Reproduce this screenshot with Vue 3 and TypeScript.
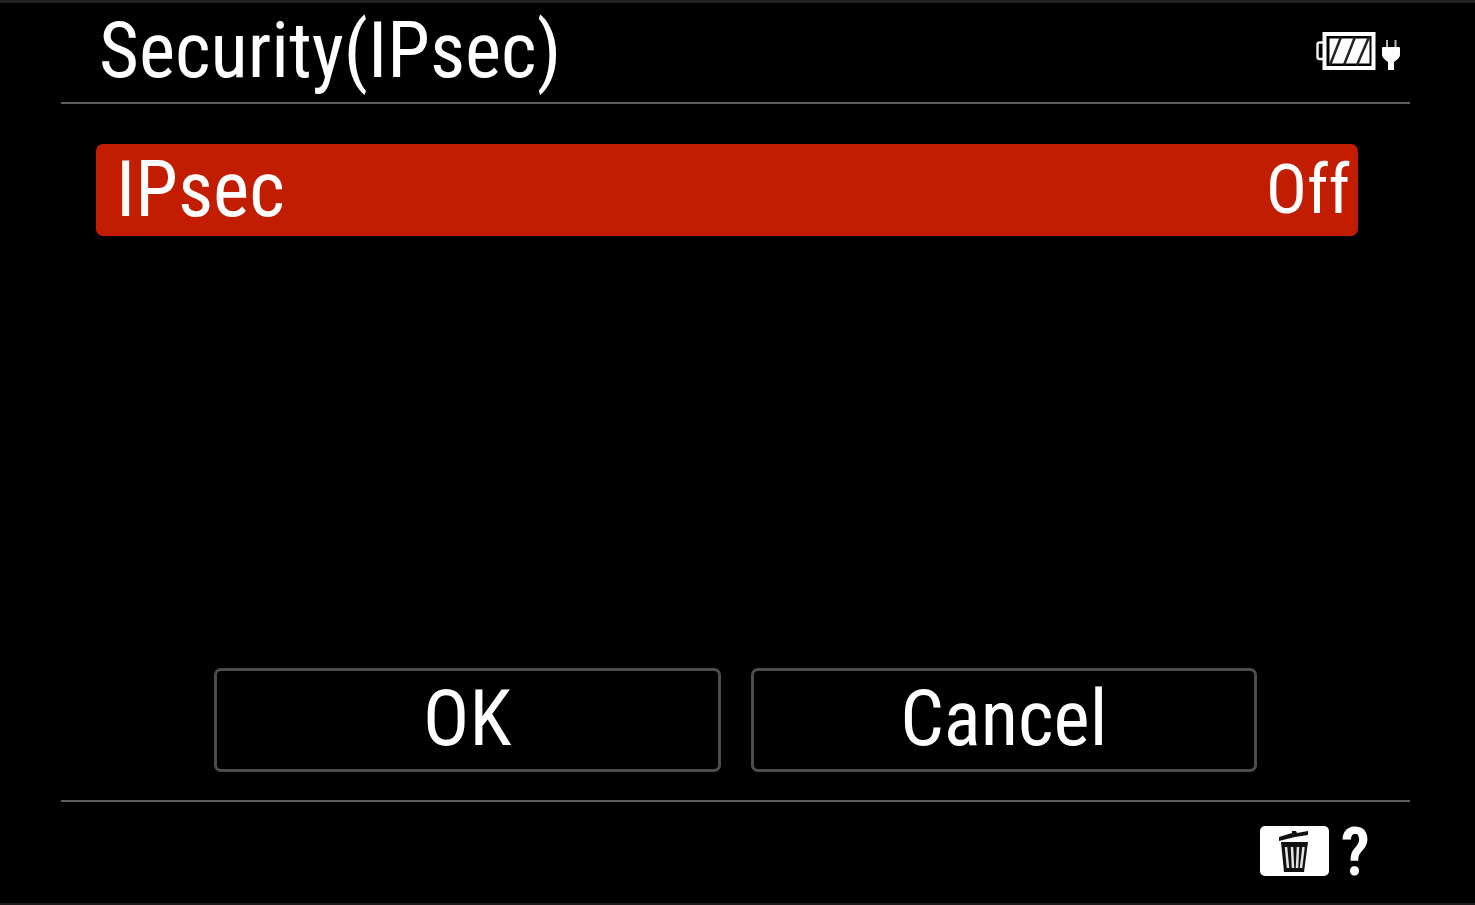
<script setup lang="ts">
import { ref } from 'vue'

interface Setting {
  label: string
  value: string
}

const title = 'Security(IPsec)'
const settings = ref<Setting[]>([{ label: 'IPsec', value: 'Off' }])
const actions: string[] = ['OK', 'Cancel']

function toggle(setting: Setting): void {
  setting.value = setting.value === 'Off' ? 'On' : 'Off'
}
</script>

<template>
  <main class="screen">
    <header class="header">
      <h1 class="title">{{ title }}</h1>
      <div class="status">
        <svg class="battery" viewBox="0 0 60 38" role="img" aria-label="Battery full">
          <path d="M7 10.500H3.500Q1.500 10.500 1.500 12.500V25Q1.500 27 3.500 27H7" fill="none" stroke="#eee" stroke-width="2.500" />
          <rect x="8.500" y="2" width="49" height="34" fill="none" stroke="#fff" stroke-width="4" />
          <rect x="13.500" y="6.500" width="40" height="25" fill="#fff" />
          <path d="M25 5L14 33M39 5L28 33M53 5L41 33" stroke="#222" stroke-width="2.500" />
        </svg>
        <svg class="plug" viewBox="0 0 18 30" role="img" aria-label="External power">
          <path d="M5 0V9M13.500 0V9" stroke="#bbb" stroke-width="2" />
          <path d="M1 7H17Q18 7 18 8V15Q18 18 12 22V30H6V22Q0 18 0 15V8Q0 7 1 7Z" fill="#fff" />
        </svg>
      </div>
    </header>

    <section class="body">
      <ul class="settings">
        <li v-for="setting in settings" :key="setting.label">
          <button type="button" class="setting" @click="toggle(setting)">
            <span>{{ setting.label }}</span>
            <span class="value">{{ setting.value }}</span>
          </button>
        </li>
      </ul>
      <div class="actions">
        <button v-for="action in actions" :key="action" type="button" class="action">
          {{ action }}
        </button>
      </div>
    </section>

    <footer class="footer">
      <button type="button" class="help" aria-label="Help">
        <svg class="trash" viewBox="0 0 70 52" aria-hidden="true">
          <rect x="1" y="1" width="69" height="50" rx="5" fill="#fff" />
          <path d="M20 12L33 8V6H37L38 8L49 6V10L36 12L20 16Z" fill="#111" />
          <path d="M22 17H49L45 47H25Z" fill="#111" />
          <path
            d="M27 22L29 43M33 22L34 43M39 22L38 43M44.500 22L42 43"
            stroke="#e4e4e4"
            stroke-width="2.500"
          />
        </svg>
        <span class="mark">?</span>
      </button>
    </footer>
  </main>
</template>

<style>
body {
  margin: 0;
  background: #000;
}
</style>

<style scoped>
.screen {
  box-sizing: border-box;
  display: flex;
  flex-direction: column;
  min-height: 100vh;
  padding: 0 65px 0 61px;
  border-top: 3px solid #222;
  border-bottom: 2px solid #1e1c1d;
  background: #000;
  color: #fff;
  font-family: 'Roboto Condensed', 'Liberation Sans Narrow', Roboto, sans-serif;
  font-size: 77px;
  line-height: 92px;
}

button {
  margin: 0;
  color: inherit;
  font: inherit;
  cursor: pointer;
}

.header {
  box-sizing: border-box;
  display: flex;
  align-items: center;
  justify-content: space-between;
  height: 101px;
  padding: 0 10px 4px 38px;
  border-bottom: 2px solid #5c5c5c;
}

.title {
  margin: 0;
  font: inherit;
}

.status {
  display: flex;
  align-items: flex-end;
  gap: 6px;
}

.battery {
  width: 60px;
  height: 38px;
}

.plug {
  width: 18px;
  height: 30px;
}

.body {
  flex: 1;
  display: flex;
  flex-direction: column;
  justify-content: space-between;
  padding: 40px 0 28px;
}

.settings {
  margin: 0 52px 0 35px;
  padding: 0;
  list-style: none;
}

.setting {
  display: flex;
  align-items: center;
  justify-content: space-between;
  width: 100%;
  height: 92px;
  padding: 0 8px 0 20px;
  border: 0;
  border-radius: 7px;
  background: #c21d00;
}

.value {
  font-size: 68px;
}

.actions {
  display: grid;
  grid-template-columns: 1fr 1fr;
  gap: 30px;
  margin: 0 153px;
}

.action {
  height: 104px;
  padding: 0 0 2px;
  border: 3px solid #4d4d4d;
  border-radius: 7px;
  background: transparent;
}

.footer {
  box-sizing: border-box;
  display: flex;
  align-items: center;
  justify-content: flex-end;
  height: 103px;
  padding: 0 40px 4px 0;
  border-top: 2px solid #5c5c5c;
}

.help {
  display: flex;
  align-items: center;
  gap: 12px;
  padding: 0;
  border: 0;
  background: transparent;
  font-size: 66px;
  font-weight: 600;
}

.mark {
  padding-top: 4px;
}

.trash {
  width: 70px;
  height: 52px;
}
</style>
